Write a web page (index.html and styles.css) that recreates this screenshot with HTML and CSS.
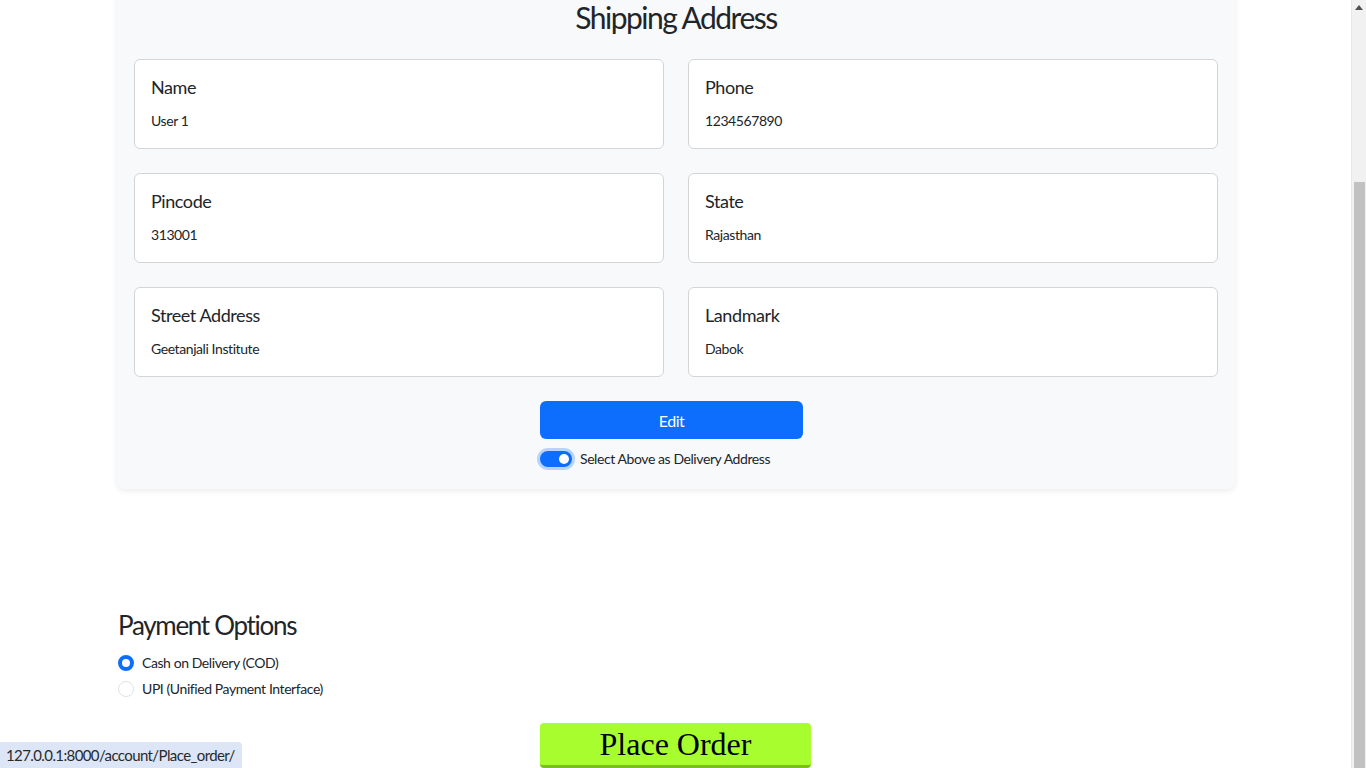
FILE: index.html
```html
<!DOCTYPE html>
<html lang="en">
<head>
<meta charset="utf-8">
<title>Checkout</title>
<link rel="stylesheet" href="styles.css">
</head>
<body>
<div class="page">
  <section class="card">
    <h2 class="card-title">Shipping Address</h2>
    <div class="fields">
      <div class="field"><div class="label">Name</div><div class="value">User 1</div></div>
      <div class="field"><div class="label">Phone</div><div class="value">1234567890</div></div>
      <div class="field"><div class="label">Pincode</div><div class="value">313001</div></div>
      <div class="field"><div class="label">State</div><div class="value">Rajasthan</div></div>
      <div class="field"><div class="label">Street Address</div><div class="value">Geetanjali Institute</div></div>
      <div class="field"><div class="label">Landmark</div><div class="value">Dabok</div></div>
    </div>
    <div class="actions">
      <button class="btn-edit">Edit</button>
      <label class="switch-row"><span class="switch"><span class="knob"></span></span>Select Above as Delivery Address</label>
    </div>
  </section>

  <section class="payment">
    <h3 class="payment-title">Payment Options</h3>
    <label class="radio-row"><span class="radio checked"></span>Cash on Delivery (COD)</label>
    <label class="radio-row"><span class="radio"></span>UPI (Unified Payment Interface)</label>
  </section>

  <div class="order-row">
    <button class="btn-order">Place Order</button>
  </div>
</div>

<div class="scrollbar"><span class="arrow"></span><span class="thumb"></span></div>
<div class="status">127.0.0.1:8000/account/Place_order/</div>
</body>
</html>
```

FILE: styles.css
```css
* { box-sizing: border-box; }
html, body { margin: 0; height: 100%; overflow: hidden; background: #fff; }
body {
  font-family: Lato, "Noto Sans", sans-serif;
  color: #212529;
  font-size: 14px;
  letter-spacing: -0.03em;
}
.page {
  width: calc(100% - 15px);
  padding-left: 1px;
  display: flex;
  flex-direction: column;
  align-items: center;
}
.card {
  width: 1118px;
  margin-top: -16px;
  padding: 15px 17px 20px;
  background: #f8f9fa;
  border-radius: 8px;
  box-shadow: 0 2px 6px rgba(0,0,0,0.08);
}
.card-title {
  margin: 0;
  text-align: center;
  font-weight: 400;
  font-size: 30px;
  line-height: 36px;
  letter-spacing: -0.05em;
}
.fields {
  margin-top: 24px;
  display: grid;
  grid-template-columns: 1fr 1fr;
  gap: 24px;
}
.field {
  background: #fff;
  border: 1px solid #d3d5d7;
  border-radius: 6px;
  height: 90px;
  padding: 16px;
}
.label { font-size: 18px; line-height: 22px; margin-bottom: 12px; }
.value { font-size: 14px; line-height: 21px; }
.actions {
  margin-top: 24px;
  padding-left: 406px;
  display: flex;
  flex-direction: column;
  align-items: flex-start;
}
.btn-edit {
  width: 263px;
  height: 38px;
  border: 0;
  border-radius: 6px;
  background: #0d6efd;
  color: #fff;
  font: inherit;
  font-size: 16px;
  letter-spacing: -0.03em;
}
.switch-row {
  margin-top: 10px;
  display: flex;
  align-items: center;
  gap: 8px;
  font-size: 14px;
  line-height: 20px;
}
.switch {
  width: 32px;
  height: 16px;
  border-radius: 8px;
  background: #0d6efd;
  box-shadow: 0 0 0 3px #b6d4fe;
  display: flex;
  align-items: center;
  justify-content: flex-end;
  padding-right: 3px;
}
.knob { width: 10px; height: 10px; border-radius: 50%; background: #fff; }
.payment {
  width: 1118px;
  margin-top: 121px;
  padding-left: 1px;
}
.payment-title {
  margin: 0 0 9px;
  font-weight: 400;
  font-size: 26px;
  line-height: 31px;
  letter-spacing: -0.05em;
}
.radio-row {
  display: flex;
  align-items: center;
  gap: 8px;
  font-size: 14px;
  line-height: 26px;
}
.radio {
  width: 16px;
  height: 16px;
  border-radius: 50%;
  border: 1px solid #dee2e6;
  background: #fff;
}
.radio.checked { border: 4px solid #0d6efd; }
.order-row { margin-top: 21px; margin-right: 1px; }
.btn-order {
  width: 271px;
  height: 45px;
  border: 0;
  border-bottom: 3px solid #7bbf1c;
  border-radius: 4px;
  background: #a8fd2f;
  color: #000;
  font-family: "Liberation Serif", serif;
  font-size: 32px;
  letter-spacing: 0;
  padding: 0;
}
.scrollbar {
  position: fixed;
  top: 0; right: 0;
  width: 15px; height: 100%;
  background: #f1f1f1;
  border-left: 1px solid #e8e8e8;
}
.arrow {
  position: absolute;
  top: 5px; left: 3px;
  width: 0; height: 0;
  border-left: 4px solid transparent;
  border-right: 4px solid transparent;
  border-bottom: 5px solid #505050;
}
.thumb {
  position: absolute;
  top: 182px; left: 2px;
  width: 11px; bottom: 0;
  background: #c1c1c1;
}
.status {
  position: fixed;
  left: 0; bottom: 0;
  height: 26px;
  padding: 0 7px 0 6px;
  background: #dce6f7;
  border-top-right-radius: 4px;
  font-size: 15px;
  letter-spacing: -0.04em;
  line-height: 26px;
  color: #2a2a2a;
}
```
